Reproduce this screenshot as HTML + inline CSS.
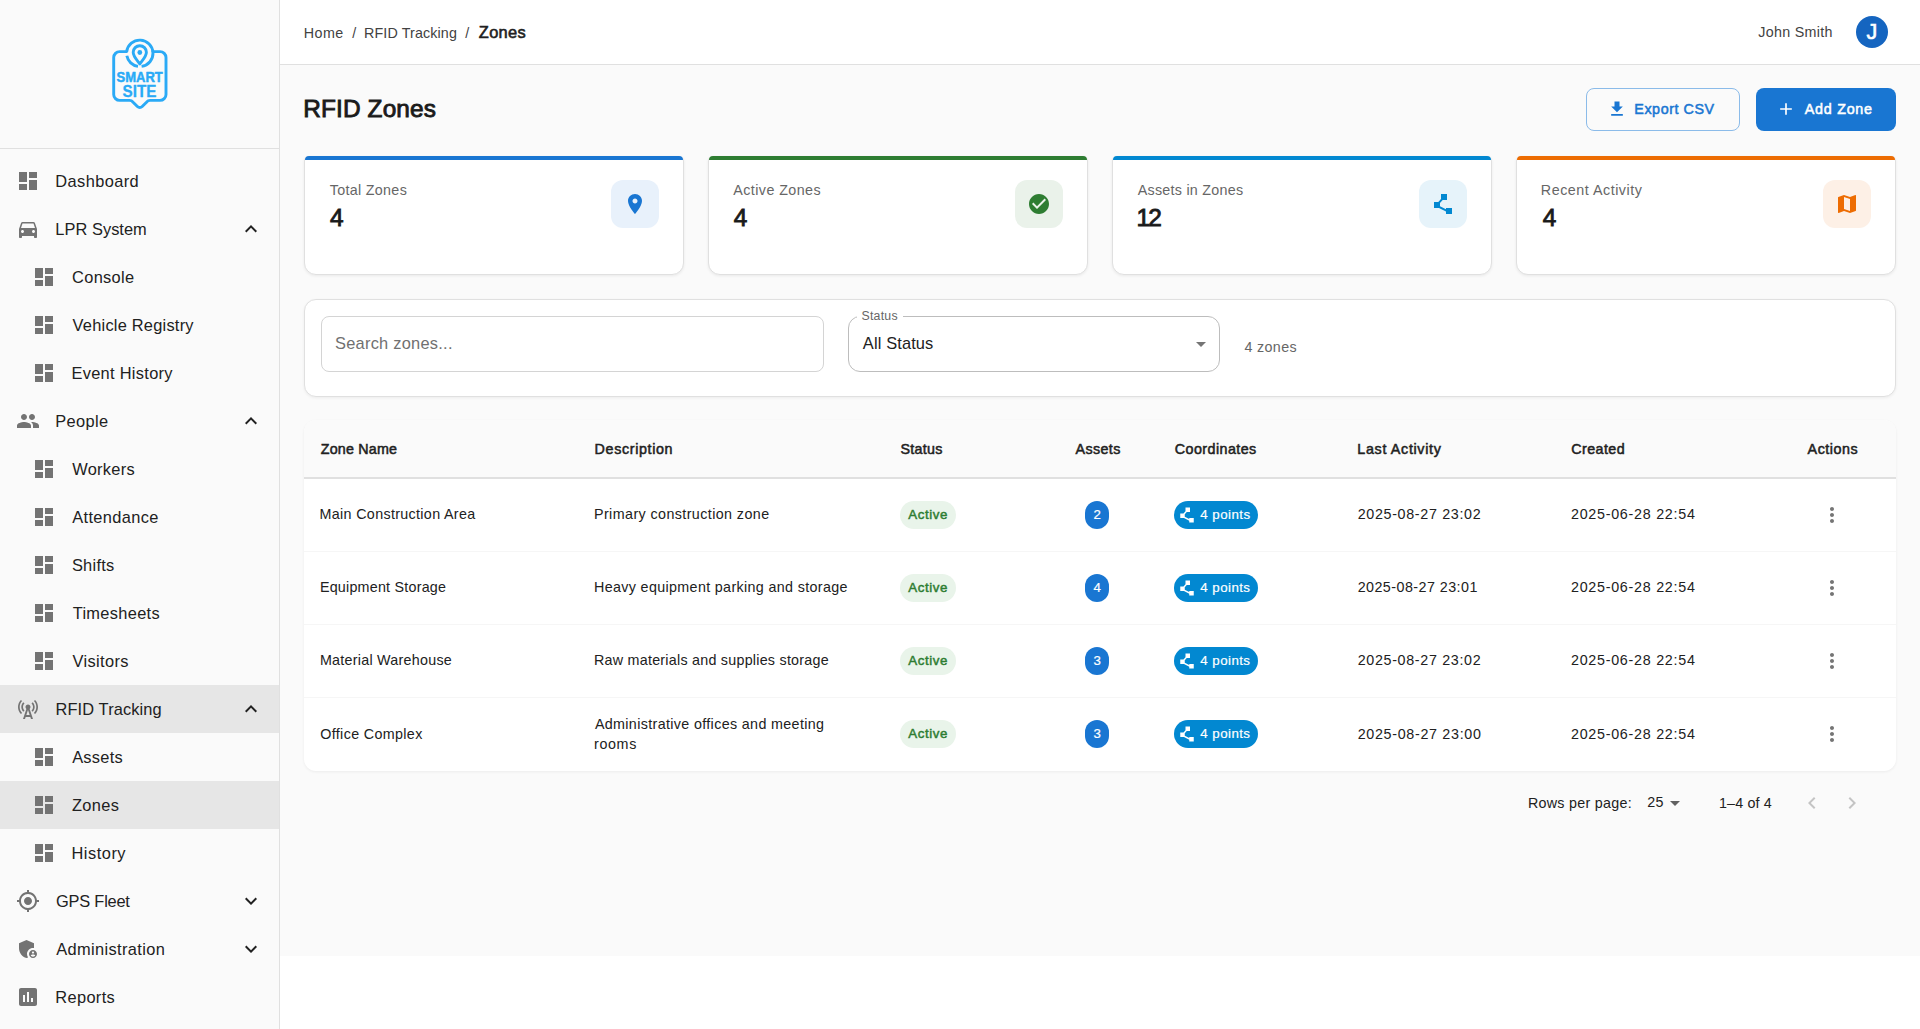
<!DOCTYPE html>
<html lang="en">
<head>
<meta charset="utf-8">
<title>RFID Zones</title>
<style>
*{box-sizing:border-box;margin:0;padding:0}
html,body{width:1920px;height:1029px;overflow:hidden;background:#fff}
body{font-family:"Liberation Sans",sans-serif;color:#212121;position:relative}
.abs{position:absolute}
svg{display:block}
.t{position:absolute;white-space:nowrap;color:#212121}
.sb{font-weight:normal;-webkit-text-stroke:0.036em currentColor}
.md{font-weight:normal;-webkit-text-stroke:0.015em currentColor}
.gr{color:#666}
.ph{color:#707070}
.bc{color:#424242}
.bcl{font-weight:normal;-webkit-text-stroke:0.036em currentColor;color:#212121}
.ttl{color:#1a1a1a}
.avj{color:#fff;-webkit-text-stroke:0.6px #fff}
/* sidebar */
#side{position:absolute;left:0;top:0;width:280px;height:1029px;background:#fafafa;border-right:1px solid #e0e0e0}
#side .div{position:absolute;left:0;top:148px;width:279px;height:1px;background:#e0e0e0}
.nav{position:absolute;left:0;width:279px;height:48px}
.nav.sel{background:#e6e6e6}
.nav .ic{position:absolute;left:16px;top:12px;fill:#737373}
.nav.sub .ic{left:32px}
.nav .ex{position:absolute;left:239px;top:12px;fill:#212121}
/* topbar */
#top{position:absolute;left:280px;top:0;width:1640px;height:65px;background:#fff;border-bottom:1px solid #e0e0e0}
.av{position:absolute;left:1576px;top:16px;width:32px;height:32px;border-radius:50%;background:#1565c0}
/* main */
#main{position:absolute;left:280px;top:65px;width:1640px;height:891px;background:#fafafa}
.btn{position:absolute;top:23px;height:42.500px;border-radius:8px}
.btn.out{border:1px solid #8bbbe9}
.btn.fil{background:#1976d2}
.card{position:absolute;top:91px;width:380px;height:118.500px;background:#fff;border:1px solid #e0e0e0;border-radius:5px 5px 12px 12px;box-shadow:0 1px 3px rgba(0,0,0,.07)}
.bar{position:absolute;top:91px;width:378px;height:4px;border-radius:4px 4px 0 0}
.ib{position:absolute;left:306px;top:23px;width:48px;height:48px;border-radius:12px;display:flex;align-items:center;justify-content:center}
.filt{position:absolute;left:24px;top:234px;width:1592px;height:98px;background:#fff;border:1px solid #e0e0e0;border-radius:12px;box-shadow:0 1px 3px rgba(0,0,0,.06)}
.inp{position:absolute;top:16px;height:56px;border:1px solid #d4d4d4;border-radius:8px}
.inp.sel{border-color:#bdbdbd;border-radius:12px}
.notch{position:absolute;left:8px;top:-2px;width:46px;height:4px;background:#fff}
.tbl{position:absolute;left:24px;top:355px;width:1592px;height:351px;background:#fff;border-radius:12px;box-shadow:0 1px 3px rgba(0,0,0,.06);overflow:hidden}
.th{position:absolute;left:0;top:0;width:100%;height:59px;background:#fafafa;border-bottom:2px solid #e0e0e0}
.tr{position:absolute;left:0;width:100%;height:73px;border-bottom:1px solid #f6f6f6}
.tr.last{border-bottom:none}
.chip{position:absolute;top:22px;height:28px;border-radius:14px}
.chip.act{background:#e9f4ea}
.chip.pts{background:#0288d1}
.bdg{position:absolute;top:22px;width:24px;height:28px;border-radius:12px;background:#1976d2}
</style>
</head>
<body>
<div id="side">
<svg class="abs" style="left:100px;top:30px" width="80" height="90" viewBox="100 30 80 90" fill="none" stroke="#2aaaf6" stroke-width="2.9" stroke-linecap="round" stroke-linejoin="round">
<path d="M126.700 51.600H119.700a6 6 0 0 0-6 6V94.400a6 6 0 0 0 6 6H129.500c1.600 0 2.600.6 3.600 1.800l4.300 4.300c1.400 1.400 3.400 1.400 4.800 0l4.300-4.300c1-1.200 2-1.800 3.600-1.800H160a6 6 0 0 0 6-6V57.600a6 6 0 0 0-6-6H152.900"/>
<path d="M126.720 51.600A13.200 13.200 0 1 1 141.600 66.380" stroke-linecap="butt"/>
<path d="M138 66.380A13.200 13.200 0 0 1 126.840 55.800" stroke-linecap="butt"/>
<path d="M139.800 63.900C137.300 60.400 133.200 56.700 133.200 52.300A6.600 6.600 0 0 1 146.400 52.300C146.400 56.700 142.300 60.400 139.800 63.900Z"/>
<circle cx="139.800" cy="52.500" r="2.400" fill="#2aaaf6" stroke="none"/>
<text x="139.650" y="82.400" text-anchor="middle" font-family="Liberation Sans, sans-serif" font-weight="bold" font-size="15.400" fill="#2aaaf6" stroke="#2aaaf6" stroke-width="0.5" textLength="46.200" lengthAdjust="spacingAndGlyphs">SMART</text>
<text x="139.550" y="97.200" text-anchor="middle" font-family="Liberation Sans, sans-serif" font-weight="bold" font-size="17" fill="#2aaaf6" stroke="#2aaaf6" stroke-width="0.3" textLength="33.900" lengthAdjust="spacingAndGlyphs">SITE</text>
</svg>
<div class="div"></div>
<div class="nav" style="top:157px"><svg class="ic" width="24" height="24" viewBox="0 0 24 24"><path d="M3 13h8V3H3v10zm0 8h8v-6H3v6zm10 0h8V11h-8v10zm0-18v6h8V3h-8z"/></svg></div>
<div class="nav" style="top:205px"><svg class="ic" width="24" height="24" viewBox="0 0 24 24"><path d="M18.92 6.01C18.72 5.42 18.16 5 17.5 5h-11c-.66 0-1.21.42-1.42 1.01L3 12v8c0 .55.45 1 1 1h1c.55 0 1-.45 1-1v-1h12v1c0 .55.45 1 1 1h1c.55 0 1-.45 1-1v-8l-2.08-5.99zM6.5 16c-.83 0-1.5-.67-1.5-1.5S5.67 13 6.5 13s1.5.67 1.5 1.5S7.33 16 6.5 16zm11 0c-.83 0-1.5-.67-1.5-1.5s.67-1.5 1.5-1.5 1.5.67 1.5 1.5-.67 1.5-1.5 1.5zM5 11l1.5-4.5h11L19 11H5z"/></svg><svg class="ex" width="24" height="24" viewBox="0 0 24 24"><path d="M12 8l-6 6 1.410 1.410L12 10.830l4.590 4.580L18 14z"/></svg></div>
<div class="nav sub" style="top:253px"><svg class="ic" width="24" height="24" viewBox="0 0 24 24"><path d="M3 13h8V3H3v10zm0 8h8v-6H3v6zm10 0h8V11h-8v10zm0-18v6h8V3h-8z"/></svg></div>
<div class="nav sub" style="top:301px"><svg class="ic" width="24" height="24" viewBox="0 0 24 24"><path d="M3 13h8V3H3v10zm0 8h8v-6H3v6zm10 0h8V11h-8v10zm0-18v6h8V3h-8z"/></svg></div>
<div class="nav sub" style="top:349px"><svg class="ic" width="24" height="24" viewBox="0 0 24 24"><path d="M3 13h8V3H3v10zm0 8h8v-6H3v6zm10 0h8V11h-8v10zm0-18v6h8V3h-8z"/></svg></div>
<div class="nav" style="top:397px"><svg class="ic" width="24" height="24" viewBox="0 0 24 24"><path d="M16 11c1.66 0 2.99-1.34 2.99-3S17.66 5 16 5c-1.66 0-3 1.34-3 3s1.34 3 3 3zm-8 0c1.66 0 2.99-1.34 2.99-3S9.66 5 8 5C6.34 5 5 6.34 5 8s1.34 3 3 3zm0 2c-2.33 0-7 1.17-7 3.5V19h14v-2.5c0-2.33-4.67-3.5-7-3.5zm8 0c-.29 0-.62.02-.97.05 1.16.84 1.97 1.97 1.97 3.45V19h6v-2.5c0-2.33-4.67-3.5-7-3.5z"/></svg><svg class="ex" width="24" height="24" viewBox="0 0 24 24"><path d="M12 8l-6 6 1.410 1.410L12 10.830l4.590 4.580L18 14z"/></svg></div>
<div class="nav sub" style="top:445px"><svg class="ic" width="24" height="24" viewBox="0 0 24 24"><path d="M3 13h8V3H3v10zm0 8h8v-6H3v6zm10 0h8V11h-8v10zm0-18v6h8V3h-8z"/></svg></div>
<div class="nav sub" style="top:493px"><svg class="ic" width="24" height="24" viewBox="0 0 24 24"><path d="M3 13h8V3H3v10zm0 8h8v-6H3v6zm10 0h8V11h-8v10zm0-18v6h8V3h-8z"/></svg></div>
<div class="nav sub" style="top:541px"><svg class="ic" width="24" height="24" viewBox="0 0 24 24"><path d="M3 13h8V3H3v10zm0 8h8v-6H3v6zm10 0h8V11h-8v10zm0-18v6h8V3h-8z"/></svg></div>
<div class="nav sub" style="top:589px"><svg class="ic" width="24" height="24" viewBox="0 0 24 24"><path d="M3 13h8V3H3v10zm0 8h8v-6H3v6zm10 0h8V11h-8v10zm0-18v6h8V3h-8z"/></svg></div>
<div class="nav sub" style="top:637px"><svg class="ic" width="24" height="24" viewBox="0 0 24 24"><path d="M3 13h8V3H3v10zm0 8h8v-6H3v6zm10 0h8V11h-8v10zm0-18v6h8V3h-8z"/></svg></div>
<div class="nav sel" style="top:685px"><svg class="ic" width="24" height="24" viewBox="0 0 24 24"><path d="M7.3 14.7l1.2-1.2c-1-1-1.5-2.3-1.5-3.5 0-1.3.5-2.6 1.5-3.5L7.3 5.3c-1.3 1.3-2 3-2 4.700s.7 3.400 2 4.700zM19.100 2.900l-1.200 1.200c1.600 1.600 2.400 3.800 2.400 5.900 0 2.100-.8 4.300-2.400 5.900l1.200 1.200c2-2 2.900-4.500 2.900-7.100 0-2.600-1-5.100-2.900-7.100zM6.100 4.100L4.900 2.900C3 4.900 2 7.400 2 10c0 2.600 1 5.100 2.900 7.100l1.200-1.200c-1.600-1.600-2.400-3.800-2.400-5.900 0-2.100.8-4.300 2.400-5.900zm10.600 10.600c1.300-1.300 2-3 2-4.700-.1-1.700-.7-3.400-2-4.700l-1.200 1.200c1 1 1.500 2.300 1.500 3.500 0 1.300-.5 2.600-1.500 3.500l1.200 1.200zM14.500 10c0-1.380-1.120-2.500-2.500-2.500S9.500 8.620 9.500 10c0 .76.340 1.420.870 1.880L7 22h2l.670-2h4.670L15 22h2l-3.370-10.120c.530-.46.870-1.120.870-1.880zm-4.170 8L12 13l1.670 5h-3.340z"/></svg><svg class="ex" width="24" height="24" viewBox="0 0 24 24"><path d="M12 8l-6 6 1.410 1.410L12 10.830l4.590 4.580L18 14z"/></svg></div>
<div class="nav sub" style="top:733px"><svg class="ic" width="24" height="24" viewBox="0 0 24 24"><path d="M3 13h8V3H3v10zm0 8h8v-6H3v6zm10 0h8V11h-8v10zm0-18v6h8V3h-8z"/></svg></div>
<div class="nav sub sel" style="top:781px"><svg class="ic" width="24" height="24" viewBox="0 0 24 24"><path d="M3 13h8V3H3v10zm0 8h8v-6H3v6zm10 0h8V11h-8v10zm0-18v6h8V3h-8z"/></svg></div>
<div class="nav sub" style="top:829px"><svg class="ic" width="24" height="24" viewBox="0 0 24 24"><path d="M3 13h8V3H3v10zm0 8h8v-6H3v6zm10 0h8V11h-8v10zm0-18v6h8V3h-8z"/></svg></div>
<div class="nav" style="top:877px"><svg class="ic" width="24" height="24" viewBox="0 0 24 24"><path d="M12 8c-2.21 0-4 1.79-4 4s1.79 4 4 4 4-1.79 4-4-1.790-4-4-4zm8.940 3c-.46-4.170-3.770-7.480-7.940-7.940V1h-2v2.060C6.830 3.520 3.520 6.830 3.060 11H1v2h2.060c.46 4.170 3.770 7.480 7.940 7.940V23h2v-2.060c4.170-.46 7.480-3.770 7.940-7.940H23v-2h-2.060zM12 19c-3.870 0-7-3.130-7-7s3.130-7 7-7 7 3.130 7 7-3.130 7-7 7z"/></svg><svg class="ex" width="24" height="24" viewBox="0 0 24 24"><path d="M16.590 8.590L12 13.170 7.410 8.590 6 10l6 6 6-6z"/></svg></div>
<div class="nav" style="top:925px"><svg class="ic" width="24" height="24" viewBox="0 0 24 24"><path d="M17 11c.34 0 .67.04 1 .09V6.270L10.500 3 3 6.270v4.910c0 4.540 3.200 8.790 7.500 9.820.55-.13 1.080-.32 1.600-.55-.69-.98-1.100-2.170-1.100-3.450 0-3.310 2.690-6 6-6z"/><path d="M17 13c-2.210 0-4 1.790-4 4s1.790 4 4 4 4-1.790 4-4-1.790-4-4-4zm0 1.380c.62 0 1.120.51 1.120 1.120s-.51 1.120-1.120 1.120-1.120-.51-1.120-1.120.5-1.120 1.120-1.120zm0 5.370c-.93 0-1.740-.46-2.240-1.170.05-.72 1.510-1.080 2.240-1.080s2.190.36 2.240 1.080c-.5.71-1.310 1.170-2.240 1.170z"/></svg><svg class="ex" width="24" height="24" viewBox="0 0 24 24"><path d="M16.590 8.590L12 13.170 7.410 8.590 6 10l6 6 6-6z"/></svg></div>
<div class="nav" style="top:973px"><svg class="ic" width="24" height="24" viewBox="0 0 24 24"><path d="M19 3H5c-1.100 0-2 .9-2 2v14c0 1.100.9 2 2 2h14c1.100 0 2-.9 2-2V5c0-1.100-.9-2-2-2zM9 17H7v-7h2v7zm4 0h-2V7h2v10zm4 0h-2v-4h2v4z"/></svg></div>
</div>
<div id="top"><div class="av"></div></div>
<div id="main">
<div class="btn out" style="left:1306px;width:154px"><svg class="abs" style="left:19.500px;top:9.700px" fill="#1976d2" width="20" height="20" viewBox="0 0 24 24"><path d="M5 20h14v-2H5v2zM19 9h-4V3H9v6H5l7 7 7-7z"/></svg></div>
<div class="btn fil" style="left:1476px;width:140px"><svg class="abs" style="left:20px;top:11px" fill="#fff" width="20" height="20" viewBox="0 0 24 24"><path d="M19 13h-6v6h-2v-6H5v-2h6V5h2v6h6v2z"/></svg></div>
<div class="card" style="left:24px"><div class="ib" style="background:#e8f1fb"><svg fill="#1976d2" width="24" height="24" viewBox="0 0 24 24"><path d="M12 2C8.130 2 5 5.130 5 9c0 5.250 7 13 7 13s7-7.750 7-13c0-3.870-3.130-7-7-7zm0 9.500c-1.380 0-2.500-1.120-2.500-2.500s1.120-2.500 2.500-2.500 2.500 1.120 2.500 2.500-1.120 2.500-2.500 2.500z"/></svg></div></div><div class="bar" style="left:25px;background:#1976d2"></div>
<div class="card" style="left:428px"><div class="ib" style="background:#eaf2ea"><svg fill="#2e7d32" width="24" height="24" viewBox="0 0 24 24"><path d="M12 2C6.480 2 2 6.480 2 12s4.480 10 10 10 10-4.480 10-10S17.520 2 12 2zm-2 15l-5-5 1.410-1.410L10 14.170l7.590-7.590L19 8l-9 9z"/></svg></div></div><div class="bar" style="left:429px;background:#2e7d32"></div>
<div class="card" style="left:832px"><div class="ib" style="background:#e6f3fa"><svg fill="#0288d1" width="24" height="24" viewBox="0 0 24 24"><path d="M15 16v1.260l-6-3v-3.170L11.700 8H16V2h-6v4.900L7.300 10H3v6h5l7 3.500V22h6v-6z"/></svg></div></div><div class="bar" style="left:833px;background:#0288d1"></div>
<div class="card" style="left:1236px"><div class="ib" style="background:#fdf0e6"><svg fill="#ed6c02" width="24" height="24" viewBox="0 0 24 24"><path d="M20.500 3l-.16.03L15 5.100 9 3 3.360 4.900c-.21.07-.36.25-.36.48V20.500c0 .28.22.5.5.5l.16-.03L9 18.900l6 2.100 5.640-1.900c.21-.07.36-.25.36-.48V3.500c0-.28-.22-.5-.5-.5zM15 19l-6-2.110V5l6 2.110V19z"/></svg></div></div><div class="bar" style="left:1237px;background:#ed6c02"></div>
<div class="filt">
<div class="inp" style="left:16px;width:503px"></div>
<div class="inp sel" style="left:543px;width:372px"><div class="notch"></div><svg class="abs" style="left:340px;top:15px" fill="#757575" width="24" height="24" viewBox="0 0 24 24"><path d="M7 10l5 5 5-5z"/></svg></div>
</div>
<div class="tbl"><div class="th"></div>
<div class="tr" style="top:59px">
<span class="chip act" style="left:596px;width:56px"></span>
<span class="bdg" style="left:781px"></span>
<span class="chip pts" style="left:870px;width:84px"><svg class="abs" style="left:4px;top:5px" fill="#fff" width="18" height="18" viewBox="0 0 24 24"><path d="M15 16v1.260l-6-3v-3.170L11.700 8H16V2h-6v4.900L7.300 10H3v6h5l7 3.500V22h6v-6z"/></svg></span>
<svg class="abs" style="left:1516px;top:24px" fill="#757575" width="24" height="24" viewBox="0 0 24 24"><path d="M12 8c1.100 0 2-.9 2-2s-.9-2-2-2-2 .9-2 2 .9 2 2 2zm0 2c-1.100 0-2 .9-2 2s.9 2 2 2 2-.9 2-2-.9-2-2-2zm0 6c-1.100 0-2 .9-2 2s.9 2 2 2 2-.9 2-2-.9-2-2-2z"/></svg>
</div>
<div class="tr" style="top:132px">
<span class="chip act" style="left:596px;width:56px"></span>
<span class="bdg" style="left:781px"></span>
<span class="chip pts" style="left:870px;width:84px"><svg class="abs" style="left:4px;top:5px" fill="#fff" width="18" height="18" viewBox="0 0 24 24"><path d="M15 16v1.260l-6-3v-3.170L11.700 8H16V2h-6v4.900L7.300 10H3v6h5l7 3.500V22h6v-6z"/></svg></span>
<svg class="abs" style="left:1516px;top:24px" fill="#757575" width="24" height="24" viewBox="0 0 24 24"><path d="M12 8c1.100 0 2-.9 2-2s-.9-2-2-2-2 .9-2 2 .9 2 2 2zm0 2c-1.100 0-2 .9-2 2s.9 2 2 2 2-.9 2-2-.9-2-2-2zm0 6c-1.100 0-2 .9-2 2s.9 2 2 2 2-.9 2-2-.9-2-2-2z"/></svg>
</div>
<div class="tr" style="top:205px">
<span class="chip act" style="left:596px;width:56px"></span>
<span class="bdg" style="left:781px"></span>
<span class="chip pts" style="left:870px;width:84px"><svg class="abs" style="left:4px;top:5px" fill="#fff" width="18" height="18" viewBox="0 0 24 24"><path d="M15 16v1.260l-6-3v-3.170L11.700 8H16V2h-6v4.900L7.300 10H3v6h5l7 3.500V22h6v-6z"/></svg></span>
<svg class="abs" style="left:1516px;top:24px" fill="#757575" width="24" height="24" viewBox="0 0 24 24"><path d="M12 8c1.100 0 2-.9 2-2s-.9-2-2-2-2 .9-2 2 .9 2 2 2zm0 2c-1.100 0-2 .9-2 2s.9 2 2 2 2-.9 2-2-.9-2-2-2zm0 6c-1.100 0-2 .9-2 2s.9 2 2 2 2-.9 2-2-.9-2-2-2z"/></svg>
</div>
<div class="tr last" style="top:278px">
<span class="chip act" style="left:596px;width:56px"></span>
<span class="bdg" style="left:781px"></span>
<span class="chip pts" style="left:870px;width:84px"><svg class="abs" style="left:4px;top:5px" fill="#fff" width="18" height="18" viewBox="0 0 24 24"><path d="M15 16v1.260l-6-3v-3.170L11.700 8H16V2h-6v4.900L7.300 10H3v6h5l7 3.500V22h6v-6z"/></svg></span>
<svg class="abs" style="left:1516px;top:24px" fill="#757575" width="24" height="24" viewBox="0 0 24 24"><path d="M12 8c1.100 0 2-.9 2-2s-.9-2-2-2-2 .9-2 2 .9 2 2 2zm0 2c-1.100 0-2 .9-2 2s.9 2 2 2 2-.9 2-2-.9-2-2-2zm0 6c-1.100 0-2 .9-2 2s.9 2 2 2 2-.9 2-2-.9-2-2-2z"/></svg>
</div>
</div>
<svg class="abs" style="left:1383px;top:726px" fill="#616161" width="24" height="24" viewBox="0 0 24 24"><path d="M7 10l5 5 5-5z"/></svg>
<svg class="abs" style="left:1520px;top:726px" fill="#c4c4c4" width="24" height="24" viewBox="0 0 24 24"><path d="M15.410 7.410L14 6l-6 6 6 6 1.410-1.410L10.830 12z"/></svg>
<svg class="abs" style="left:1560px;top:726px" fill="#c4c4c4" width="24" height="24" viewBox="0 0 24 24"><path d="M10 6L8.590 7.410 13.170 12l-4.580 4.590L10 18l6-6z"/></svg>
</div>
<span id="n0" class="t nv" style="left:55.32px;top:171.32px;font-size:16.4px;line-height:20px;letter-spacing:0.402px">Dashboard</span>
<span id="n1" class="t nv" style="left:55.32px;top:219.32px;font-size:16.4px;line-height:20px;letter-spacing:0.042px">LPR System</span>
<span id="n2" class="t nv" style="left:72.05px;top:267.32px;font-size:16.4px;line-height:20px;letter-spacing:0.319px">Console</span>
<span id="n3" class="t nv" style="left:72.58px;top:315.32px;font-size:16.4px;line-height:20px;letter-spacing:0.228px">Vehicle Registry</span>
<span id="n4" class="t nv" style="left:71.49px;top:363.32px;font-size:16.4px;line-height:20px;letter-spacing:0.298px">Event History</span>
<span id="n5" class="t nv" style="left:55.24px;top:411.32px;font-size:16.4px;line-height:20px;letter-spacing:0.354px">People</span>
<span id="n6" class="t nv" style="left:72.25px;top:459.32px;font-size:16.4px;line-height:20px;letter-spacing:0.289px">Workers</span>
<span id="n7" class="t nv" style="left:72.16px;top:507.32px;font-size:16.4px;line-height:20px;letter-spacing:0.371px">Attendance</span>
<span id="n8" class="t nv" style="left:71.92px;top:555.32px;font-size:16.4px;line-height:20px;letter-spacing:0.275px">Shifts</span>
<span id="n9" class="t nv" style="left:72.69px;top:603.32px;font-size:16.4px;line-height:20px;letter-spacing:0.317px">Timesheets</span>
<span id="n10" class="t nv" style="left:72.56px;top:651.32px;font-size:16.4px;line-height:20px;letter-spacing:0.342px">Visitors</span>
<span id="n11" class="t nv" style="left:55.49px;top:699.32px;font-size:16.4px;line-height:20px;letter-spacing:0.124px">RFID Tracking</span>
<span id="n12" class="t nv" style="left:72.16px;top:747.32px;font-size:16.4px;line-height:20px;letter-spacing:0.271px">Assets</span>
<span id="n13" class="t nv" style="left:71.92px;top:795.32px;font-size:16.4px;line-height:20px;letter-spacing:0.380px">Zones</span>
<span id="n14" class="t nv" style="left:71.49px;top:843.32px;font-size:16.4px;line-height:20px;letter-spacing:0.510px">History</span>
<span id="n15" class="t nv" style="left:56.05px;top:891.32px;font-size:16.4px;line-height:20px;letter-spacing:-0.219px">GPS Fleet</span>
<span id="n16" class="t nv" style="left:56.16px;top:939.32px;font-size:16.4px;line-height:20px;letter-spacing:0.366px">Administration</span>
<span id="n17" class="t nv" style="left:55.32px;top:987.32px;font-size:16.4px;line-height:20px;letter-spacing:0.344px">Reports</span>
<span id="bc1" class="t bc" style="left:303.68px;top:23.05px;font-size:14.3px;line-height:20px;letter-spacing:0.492px">Home</span>
<span id="bc2" class="t bc" style="left:352.22px;top:23.05px;font-size:14.3px;line-height:20px">/</span>
<span id="bc3" class="t bc" style="left:364.00px;top:23.05px;font-size:14.3px;line-height:20px;letter-spacing:0.123px">RFID Tracking</span>
<span id="bc4" class="t bc" style="left:465.20px;top:23.05px;font-size:14.3px;line-height:20px">/</span>
<span id="bc5" class="t bcl" style="left:478.75px;top:22.32px;font-size:16.4px;line-height:20px;letter-spacing:0.363px">Zones</span>
<span id="usr" class="t bc" style="left:1758.25px;top:22.05px;font-size:14.3px;line-height:20px;letter-spacing:0.309px">John Smith</span>
<span id="avj" class="t avj" style="left:1866.40px;top:16.22px;font-size:21.6px;line-height:32px">J</span>
<span id="ttl" class="t sb ttl" style="left:303.36px;top:92.55px;font-size:24.4px;line-height:32px;letter-spacing:0.116px">RFID Zones</span>
<span id="b1" class="t sb" style="left:1634.32px;top:99.05px;font-size:14.3px;line-height:20px;letter-spacing:0.560px;color:#1976d2">Export CSV</span>
<span id="b2" class="t sb" style="left:1804.84px;top:99.05px;font-size:14.3px;line-height:20px;letter-spacing:0.740px;color:#fff">Add Zone</span>
<span id="cl0" class="t gr" style="left:329.82px;top:180.05px;font-size:14.3px;line-height:20px;letter-spacing:0.306px">Total Zones</span>
<span id="cv0" class="t sb ttl" style="left:330.04px;top:201.55px;font-size:24.4px;line-height:32px">4</span>
<span id="cl1" class="t gr" style="left:733.34px;top:180.05px;font-size:14.3px;line-height:20px;letter-spacing:0.415px">Active Zones</span>
<span id="cv1" class="t sb ttl" style="left:733.82px;top:201.55px;font-size:24.4px;line-height:32px">4</span>
<span id="cl2" class="t gr" style="left:1137.70px;top:180.05px;font-size:14.3px;line-height:20px;letter-spacing:0.264px">Assets in Zones</span>
<span id="cv2" class="t sb ttl" style="left:1136.51px;top:201.55px;font-size:24.4px;line-height:32px;letter-spacing:-1.719px">12</span>
<span id="cl3" class="t gr" style="left:1540.85px;top:180.05px;font-size:14.3px;line-height:20px;letter-spacing:0.515px">Recent Activity</span>
<span id="cv3" class="t sb ttl" style="left:1542.79px;top:201.55px;font-size:24.4px;line-height:32px">4</span>
<span id="ph" class="t ph" style="left:335.01px;top:333.32px;font-size:16.4px;line-height:20px;letter-spacing:0.256px">Search zones...</span>
<span id="lb" class="t gr" style="left:861.56px;top:305.74px;font-size:12.3px;line-height:20px;letter-spacing:0.228px">Status</span>
<span id="sv" class="t " style="left:862.85px;top:333.32px;font-size:16.4px;line-height:20px;letter-spacing:0.132px">All Status</span>
<span id="zc" class="t gr" style="left:1244.49px;top:337.05px;font-size:14.3px;line-height:20px;letter-spacing:0.335px">4 zones</span>
<span id="h0" class="t sb" style="left:320.84px;top:439.05px;font-size:14.3px;line-height:20px;letter-spacing:0.175px">Zone Name</span>
<span id="h1" class="t sb" style="left:594.61px;top:439.05px;font-size:14.3px;line-height:20px;letter-spacing:0.640px">Description</span>
<span id="h2" class="t sb" style="left:900.41px;top:439.05px;font-size:14.3px;line-height:20px;letter-spacing:0.286px">Status</span>
<span id="h3" class="t sb" style="left:1075.57px;top:439.05px;font-size:14.3px;line-height:20px;letter-spacing:0.373px">Assets</span>
<span id="h4" class="t sb" style="left:1174.83px;top:439.05px;font-size:14.3px;line-height:20px;letter-spacing:0.431px">Coordinates</span>
<span id="h5" class="t sb" style="left:1357.36px;top:439.05px;font-size:14.3px;line-height:20px;letter-spacing:0.661px">Last Activity</span>
<span id="h6" class="t sb" style="left:1571.17px;top:439.05px;font-size:14.3px;line-height:20px;letter-spacing:0.444px">Created</span>
<span id="h7" class="t sb" style="left:1807.59px;top:439.05px;font-size:14.3px;line-height:20px;letter-spacing:0.521px">Actions</span>
<span id="r0a" class="t " style="left:319.59px;top:504.05px;font-size:14.3px;line-height:20px;letter-spacing:0.331px">Main Construction Area</span>
<span id="r0b" class="t " style="left:594.00px;top:504.05px;font-size:14.3px;line-height:20px;letter-spacing:0.409px">Primary construction zone</span>
<span id="a0" class="t sb" style="left:908.34px;top:504.99px;font-size:13.3px;line-height:20px;letter-spacing:0.552px;color:#2e7d32">Active</span>
<span id="bn0" class="t md" style="left:1093.50px;top:504.99px;font-size:13.3px;line-height:20px;color:#fff">2</span>
<span id="pt0" class="t md" style="left:1200.30px;top:504.99px;font-size:13.3px;line-height:20px;letter-spacing:0.460px;color:#fff">4 points</span>
<span id="r0c" class="t " style="left:1357.66px;top:504.05px;font-size:14.3px;line-height:20px;letter-spacing:0.671px">2025-08-27 23:02</span>
<span id="r0d" class="t " style="left:1570.96px;top:504.05px;font-size:14.3px;line-height:20px;letter-spacing:0.734px">2025-06-28 22:54</span>
<span id="r1a" class="t " style="left:319.91px;top:577.05px;font-size:14.3px;line-height:20px;letter-spacing:0.228px">Equipment Storage</span>
<span id="r1b" class="t " style="left:594.00px;top:577.05px;font-size:14.3px;line-height:20px;letter-spacing:0.349px">Heavy equipment parking and storage</span>
<span id="a1" class="t sb" style="left:908.34px;top:577.99px;font-size:13.3px;line-height:20px;letter-spacing:0.552px;color:#2e7d32">Active</span>
<span id="bn1" class="t md" style="left:1093.50px;top:577.99px;font-size:13.3px;line-height:20px;color:#fff">4</span>
<span id="pt1" class="t md" style="left:1200.30px;top:577.99px;font-size:13.3px;line-height:20px;letter-spacing:0.450px;color:#fff">4 points</span>
<span id="r1c" class="t " style="left:1357.66px;top:577.05px;font-size:14.3px;line-height:20px;letter-spacing:0.454px">2025-08-27 23:01</span>
<span id="r1d" class="t " style="left:1570.96px;top:577.05px;font-size:14.3px;line-height:20px;letter-spacing:0.734px">2025-06-28 22:54</span>
<span id="r2a" class="t " style="left:319.91px;top:650.05px;font-size:14.3px;line-height:20px;letter-spacing:0.264px">Material Warehouse</span>
<span id="r2b" class="t " style="left:594.00px;top:650.05px;font-size:14.3px;line-height:20px;letter-spacing:0.248px">Raw materials and supplies storage</span>
<span id="a2" class="t sb" style="left:908.34px;top:650.99px;font-size:13.3px;line-height:20px;letter-spacing:0.552px;color:#2e7d32">Active</span>
<span id="bn2" class="t md" style="left:1093.50px;top:650.99px;font-size:13.3px;line-height:20px;color:#fff">3</span>
<span id="pt2" class="t md" style="left:1200.30px;top:650.99px;font-size:13.3px;line-height:20px;letter-spacing:0.450px;color:#fff">4 points</span>
<span id="r2c" class="t " style="left:1357.66px;top:650.05px;font-size:14.3px;line-height:20px;letter-spacing:0.671px">2025-08-27 23:02</span>
<span id="r2d" class="t " style="left:1570.96px;top:650.05px;font-size:14.3px;line-height:20px;letter-spacing:0.734px">2025-06-28 22:54</span>
<span id="r3a" class="t " style="left:320.24px;top:724.05px;font-size:14.3px;line-height:20px;letter-spacing:0.352px">Office Complex</span>
<span id="r3b" class="t " style="left:594.88px;top:714.05px;font-size:14.3px;line-height:20px;letter-spacing:0.353px">Administrative offices and meeting</span>
<span id="r3b2" class="t " style="left:594.00px;top:734.05px;font-size:14.3px;line-height:20px;letter-spacing:0.642px">rooms</span>
<span id="a3" class="t sb" style="left:908.34px;top:723.99px;font-size:13.3px;line-height:20px;letter-spacing:0.552px;color:#2e7d32">Active</span>
<span id="bn3" class="t md" style="left:1093.50px;top:723.99px;font-size:13.3px;line-height:20px;color:#fff">3</span>
<span id="pt3" class="t md" style="left:1200.30px;top:723.99px;font-size:13.3px;line-height:20px;letter-spacing:0.450px;color:#fff">4 points</span>
<span id="r3c" class="t " style="left:1357.66px;top:724.05px;font-size:14.3px;line-height:20px;letter-spacing:0.692px">2025-08-27 23:00</span>
<span id="r3d" class="t " style="left:1570.96px;top:724.05px;font-size:14.3px;line-height:20px;letter-spacing:0.734px">2025-06-28 22:54</span>
<span id="p1" class="t " style="left:1527.92px;top:793.05px;font-size:14.3px;line-height:20px;letter-spacing:0.284px">Rows per page:</span>
<span id="p2" class="t " style="left:1647.36px;top:792.45px;font-size:14.3px;line-height:20px;letter-spacing:0.195px">25</span>
<span id="p3" class="t " style="left:1719.00px;top:793.05px;font-size:14.3px;line-height:20px;letter-spacing:0.141px">1–4 of 4</span>
</body>
</html>
